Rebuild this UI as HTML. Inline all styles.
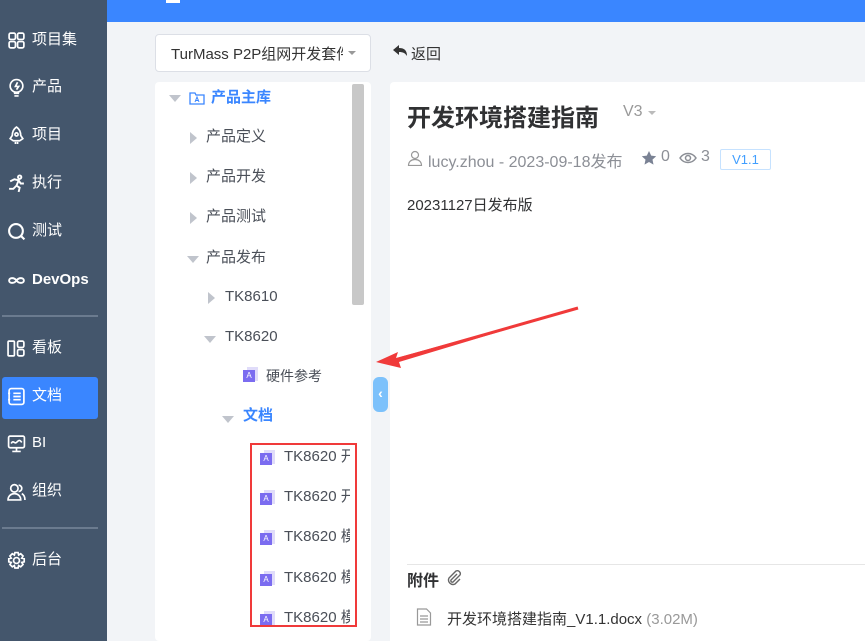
<!DOCTYPE html>
<html><head><meta charset="utf-8"><style>
*{margin:0;padding:0;box-sizing:border-box}
body{width:865px;height:641px;overflow:hidden;background:#f2f4f7;font-family:"Liberation Sans","Noto Sans CJK SC",sans-serif;position:relative}
.a{position:absolute;white-space:nowrap}
.side{left:0;top:0;width:107px;height:641px;background:#44566c}
.si{left:7px;color:#fff;font-size:15px;line-height:20px;display:flex;align-items:center}
.si svg{width:19px;height:19px;margin-right:6px;flex-shrink:0}
.hr{left:2px;width:96px;height:2px;background:#6b7b8f}
.t{font-size:15px;color:#4a4f58;line-height:20px}
.car{width:0;height:0;position:absolute}
.cr{border-top:6px solid transparent;border-bottom:6px solid transparent;border-left:7px solid #c0c4cc}
.cd{border-left:6px solid transparent;border-right:6px solid transparent;border-top:7px solid #c0c4cc}
.di{position:absolute;width:16px;height:16px}
</style></head><body>
<div class="a" style="left:107px;top:0;width:758px;height:22px;background:#3a86ff"></div>
<div class="a" style="left:166px;top:0;width:14px;height:3px;background:#fff"></div>
<div class="a side"></div>
<div class="a si" style="top:30px"><svg viewBox="0 0 18 18" fill="none" stroke="#fff" stroke-width="1.6"><rect x="2" y="2" width="6" height="6" rx="1.5"/><rect x="10" y="2" width="6" height="6" rx="1.5"/><rect x="2" y="10" width="6" height="6" rx="1.5"/><rect x="10" y="10" width="6" height="6" rx="1.5"/></svg>项目集</div>
<div class="a si" style="top:77px"><svg viewBox="0 0 18 18" fill="none" stroke="#fff" stroke-width="1.6"><circle cx="9" cy="7.5" r="6"/><path d="M10 4l-2 4h3l-2 3M6.5 14.5h5M7 17h4"/></svg>产品</div>
<div class="a si" style="top:125px"><svg viewBox="0 0 18 18" fill="none" stroke="#fff" stroke-width="1.6"><path d="M9 1c3 2 4 5 4 8l2 3-3 2H6l-3-2 2-3c0-3 1-6 4-8z"/><circle cx="9" cy="8" r="1.5"/><path d="M8 15v2M10 15v2"/></svg>项目</div>
<div class="a si" style="top:173px"><svg viewBox="0 0 18 18" fill="none" stroke="#fff" stroke-width="1.8"><circle cx="12" cy="3" r="1.6"/><path d="M3 7l4-2 4 1-2 5 3 2-1 4M9 11l-3 3-4 0M11 6l2 3h3"/></svg>执行</div>
<div class="a si" style="top:221px"><svg viewBox="0 0 18 18" fill="none" stroke="#fff" stroke-width="2"><circle cx="8.5" cy="8.5" r="6.5"/><path d="M13 13l3.5 3.5"/></svg>测试</div>
<div class="a si" style="top:270px;font-weight:bold"><svg viewBox="0 0 18 18" fill="none" stroke="#fff" stroke-width="1.8"><path d="M9 9c-2-3-7-3-7 0s5 3 7 0c2-3 7-3 7 0s-5 3-7 0z"/></svg>DevOps</div>
<div class="a hr" style="top:315px"></div>
<div class="a si" style="top:338px"><svg viewBox="0 0 18 18" fill="none" stroke="#fff" stroke-width="1.6"><rect x="1" y="2" width="6" height="14" rx="1"/><rect x="10" y="2" width="6" height="6" rx="1.5"/><rect x="10" y="10" width="6" height="6" rx="1.5"/></svg>看板</div>
<div class="a" style="left:2px;top:377px;width:96px;height:42px;background:#3a86ff;border-radius:3px"></div>
<div class="a si" style="top:386px"><svg viewBox="0 0 18 18" fill="none" stroke="#fff" stroke-width="1.6"><rect x="2" y="1.5" width="14" height="15" rx="2"/><path d="M6 6h7M6 9h7M6 12h7M1 6h2M1 12h2"/></svg>文档</div>
<div class="a si" style="top:433px"><svg viewBox="0 0 18 18" fill="none" stroke="#fff" stroke-width="1.6"><rect x="1.5" y="2" width="15" height="11" rx="1.5"/><path d="M4 9c2-4 3 1 5-1s3-3 5 0M9 13v3M5 16.5h8"/></svg>BI</div>
<div class="a si" style="top:481px"><svg viewBox="0 0 18 18" fill="none" stroke="#fff" stroke-width="1.6"><circle cx="7" cy="6" r="3.5"/><path d="M1 17c0-4 3-6 6-6s6 2 6 6zM11 3a3 3 0 010 6M14 11c2 1 3 3 3 6"/></svg>组织</div>
<div class="a hr" style="top:527px"></div>
<div class="a si" style="top:550px"><svg viewBox="0 0 18 18" fill="none" stroke="#fff" stroke-width="1.6"><circle cx="9" cy="9" r="2.8"/><path d="M7.5 1.5h3l.5 2.3 2-1.2 2.2 2.2-1.2 2 2.3.5v3l-2.3.5 1.2 2-2.2 2.2-2-1.2-.5 2.3h-3l-.5-2.3-2 1.2-2.2-2.2 1.2-2-2.3-.5v-3l2.3-.5-1.2-2 2.2-2.2 2 1.2z"/></svg>后台</div>

<div class="a" style="left:155px;top:34px;width:216px;height:38px;background:#fff;border:1px solid #dcdfe6;border-radius:4px"></div>
<div class="a" style="left:171px;top:43px;font-size:15px;color:#333;width:172px;overflow:hidden">TurMass P2P组网开发套件</div>
<div class="car cd a" style="left:348px;top:51px;border-width:4px;border-top-width:4px;border-top-color:#999"></div>
<div class="a" style="left:392px;top:43px;width:18px"><svg width="16" height="16" viewBox="0 0 16 16"><path d="M1 7l6-5v3c5 0 8 2 8 8-2-3-4-4-8-4v3z" fill="#333"/></svg></div>
<div class="a" style="left:411px;top:43px;font-size:15px;color:#333">返回</div>

<div class="a" style="left:155px;top:82px;width:216px;height:559px;background:#fff;border-radius:4px;overflow:hidden">
 <div class="a" style="left:197px;top:2px;width:12px;height:221px;background:#c8c8c8;border-radius:2px"></div>
 <div class="car cd" style="left:14px;top:13px"></div>
 <svg class="di" style="left:34px;top:8px" viewBox="0 0 16 16" fill="none" stroke="#3a86ff" stroke-width="1.3"><path d="M1 3h5l1 2h8v9H1z"/><path d="M6 12l2-5 2 5M7 10.5h2" stroke-width="1"/></svg>
 <div class="a t" style="left:56px;top:6px;color:#3a86ff;font-weight:bold">产品主库</div>
 <div class="car cr" style="left:35px;top:50px"></div><div class="a t" style="left:51px;top:45px">产品定义</div>
 <div class="car cr" style="left:35px;top:90px"></div><div class="a t" style="left:51px;top:85px">产品开发</div>
 <div class="car cr" style="left:35px;top:130px"></div><div class="a t" style="left:51px;top:125px">产品测试</div>
 <div class="car cd" style="left:32px;top:174px"></div><div class="a t" style="left:51px;top:166px">产品发布</div>
 <div class="car cr" style="left:53px;top:210px"></div><div class="a t" style="left:70px;top:205px">TK8610</div>
 <div class="car cd" style="left:49px;top:254px"></div><div class="a t" style="left:70px;top:245px">TK8620</div>
 <div class="di" style="left:88px;top:285px"><div class="a" style="left:4px;top:0;width:11px;height:14px;background:#e0dcfa"></div><div class="a" style="left:0;top:3px;width:12px;height:12px;background:#7b6cf0;color:#fff;font-size:8px;text-align:center;line-height:12px">A</div></div>
 <div class="a t" style="left:111px;top:284px;font-size:14px">硬件参考</div>
 <div class="car cd" style="left:67px;top:334px"></div><div class="a t" style="left:88px;top:324px;color:#3a86ff;font-weight:bold">文档</div>
</div>
<div class="a" style="left:250px;top:443px;width:107px;height:184px;border:2px solid #f03a3a;background:#fff"><div class="a" style="left:0;top:0;width:98px;height:180px;overflow:hidden">
 <div class="di" style="left:8px;top:5px"><div class="a" style="left:4px;top:0;width:11px;height:14px;background:#e0dcfa"></div><div class="a" style="left:0;top:3px;width:12px;height:12px;background:#7b6cf0;color:#fff;font-size:8px;text-align:center;line-height:12px">A</div></div>
 <div class="a t" style="left:32px;top:2px">TK8620 开</div>
 <div class="di" style="left:8px;top:45px"><div class="a" style="left:4px;top:0;width:11px;height:14px;background:#e0dcfa"></div><div class="a" style="left:0;top:3px;width:12px;height:12px;background:#7b6cf0;color:#fff;font-size:8px;text-align:center;line-height:12px">A</div></div>
 <div class="a t" style="left:32px;top:42px">TK8620 开</div>
 <div class="di" style="left:8px;top:85px"><div class="a" style="left:4px;top:0;width:11px;height:14px;background:#e0dcfa"></div><div class="a" style="left:0;top:3px;width:12px;height:12px;background:#7b6cf0;color:#fff;font-size:8px;text-align:center;line-height:12px">A</div></div>
 <div class="a t" style="left:32px;top:82px">TK8620 模</div>
 <div class="di" style="left:8px;top:126px"><div class="a" style="left:4px;top:0;width:11px;height:14px;background:#e0dcfa"></div><div class="a" style="left:0;top:3px;width:12px;height:12px;background:#7b6cf0;color:#fff;font-size:8px;text-align:center;line-height:12px">A</div></div>
 <div class="a t" style="left:32px;top:123px">TK8620 模</div>
 <div class="di" style="left:8px;top:166px"><div class="a" style="left:4px;top:0;width:11px;height:14px;background:#e0dcfa"></div><div class="a" style="left:0;top:3px;width:12px;height:12px;background:#7b6cf0;color:#fff;font-size:8px;text-align:center;line-height:12px">A</div></div>
 <div class="a t" style="left:32px;top:163px">TK8620 模</div>
</div></div>
<div class="a" style="left:373px;top:377px;width:15px;height:35px;background:#7cc1fb;border-radius:6px;color:#fff;font-size:14px;font-weight:bold;text-align:center;line-height:33px">‹</div>

<div class="a" style="left:390px;top:82px;width:475px;height:559px;background:#fff;border-radius:4px 0 0 0"></div>
<div class="a" style="left:407px;top:98px;font-size:24px;font-weight:bold;color:#303133">开发环境搭建指南</div>
<div class="a" style="left:623px;top:103px;font-size:16px;color:#999">V3</div>
<div class="car cd a" style="left:648px;top:111px;border-width:4px;border-top-width:4px;border-top-color:#bbb"></div>
<svg class="a" style="left:407px;top:150px" width="16" height="16" viewBox="0 0 16 16" fill="none" stroke="#999" stroke-width="1.2"><circle cx="8" cy="5" r="3.5"/><path d="M1.5 15.5c0-4 3-6 6.5-6s6.5 2 6.5 6z"/></svg>
<div class="a" style="left:428px;top:148px;font-size:16px;color:#8c8f96">lucy.zhou - 2023-09-18发布</div>
<svg class="a" style="left:641px;top:150px" width="16" height="16" viewBox="0 0 16 16"><path d="M8 1l2.2 4.6 5 .6-3.7 3.4 1 5L8 12l-4.5 2.6 1-5L.8 6.2l5-.6z" fill="#7a8294"/></svg>
<div class="a" style="left:661px;top:148px;font-size:16px;color:#8c8f96">0</div>
<svg class="a" style="left:679px;top:151px" width="18" height="14" viewBox="0 0 18 14" fill="none" stroke="#8c8f96" stroke-width="1.5"><path d="M1 7c4-6 12-6 16 0-4 6-12 6-16 0z"/><circle cx="9" cy="7" r="2.5"/></svg>
<div class="a" style="left:701px;top:148px;font-size:16px;color:#8c8f96">3</div>
<div class="a" style="left:720px;top:149px;width:51px;height:21px;border:1px solid #c6e2ff;border-radius:2px;color:#409eff;font-size:13px;text-align:center;line-height:19px">V1.1</div>
<div class="a" style="left:407px;top:194px;font-size:15px;color:#303133">20231127日发布版</div>
<div class="a" style="left:407px;top:564px;width:458px;height:1px;background:#e6e6e6"></div>
<div class="a" style="left:407px;top:567px;font-size:16px;font-weight:bold;color:#303133">附件</div>
<svg class="a" style="left:445px;top:569px" width="17" height="17" viewBox="0 0 17 17" fill="none" stroke="#666" stroke-width="1.4"><path d="M12 5l-6 6a1.5 1.5 0 002 2l7-7a3 3 0 00-4-4l-7 7a4.5 4.5 0 006 6l5-5"/></svg>
<svg class="a" style="left:416px;top:608px" width="16" height="18" viewBox="0 0 16 18" fill="none" stroke="#999" stroke-width="1.2"><path d="M1.5 1h9l4 4v12h-13z"/><path d="M4 8h8M4 11h8M4 14h8"/></svg>
<div class="a" style="left:447px;top:608px;font-size:15px;color:#333">开发环境搭建指南_V1.1.docx <span style="color:#999">(3.02M)</span></div>

<svg class="a" style="left:0;top:0" width="865" height="641"><path d="M578 308 L396 358 L398 352 L376 362 L401 368 L399 362 Z" fill="#f03a3a"/><line x1="578" y1="308" x2="392" y2="361" stroke="#f03a3a" stroke-width="3"/></svg>
</body></html>
